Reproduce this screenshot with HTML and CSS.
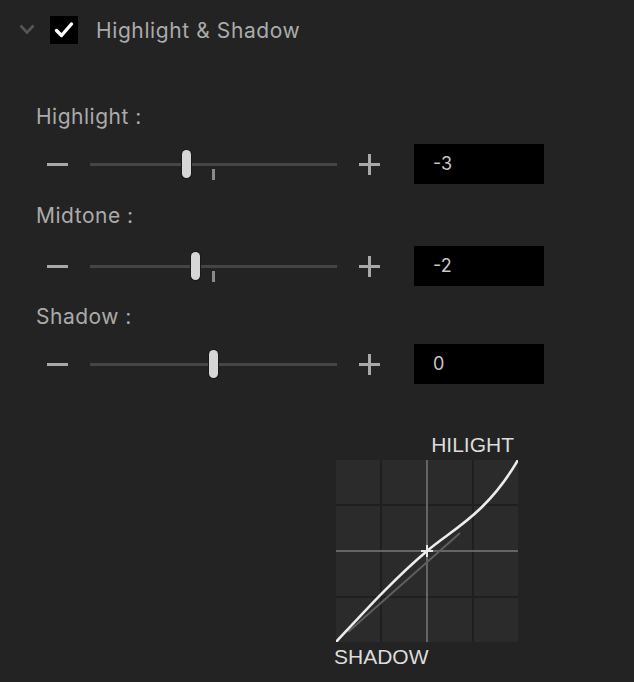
FILE: index.html
```html
<!DOCTYPE html>
<html>
<head>
<meta charset="utf-8">
<link rel="stylesheet" href="styles.css">
</head>
<body>
<div class="panel">
  <div class="header">
    <svg class="chevron" width="16" height="11" viewBox="0 0 16 11"><path d="M1.5 1.5 L8 8.5 L14.5 1.5" fill="none" stroke="#565656" stroke-width="2.6"/></svg>
    <div class="checkbox">
      <svg width="28" height="28" viewBox="0 0 28 28"><path d="M6.5 14.5 L11.5 19.5 L21.5 8" fill="none" stroke="#ffffff" stroke-width="3.4" stroke-linecap="round" stroke-linejoin="round"/></svg>
    </div>
    <div class="title">Highlight &amp; Shadow</div>
  </div>

  <div class="group g1">
    <div class="label">Highlight :</div>
    <div class="row">
      <div class="minus"></div>
      <div class="slider">
        <div class="track"></div>
        <div class="tick"></div>
        <div class="thumb" style="left:92px"></div>
      </div>
      <div class="plus"></div>
      <div class="valuebox">-3</div>
    </div>
  </div>

  <div class="group g2">
    <div class="label">Midtone :</div>
    <div class="row">
      <div class="minus"></div>
      <div class="slider">
        <div class="track"></div>
        <div class="tick"></div>
        <div class="thumb" style="left:101px"></div>
      </div>
      <div class="plus"></div>
      <div class="valuebox">-2</div>
    </div>
  </div>

  <div class="group g3">
    <div class="label">Shadow :</div>
    <div class="row">
      <div class="minus"></div>
      <div class="slider">
        <div class="track"></div>
        <div class="thumb" style="left:119px"></div>
      </div>
      <div class="plus"></div>
      <div class="valuebox">0</div>
    </div>
  </div>

  <div class="graphwrap">
    <div class="hilight">HILIGHT</div>
    <svg class="graph" width="182" height="182" viewBox="0 0 182 182">
      <rect x="0" y="0" width="182" height="182" fill="#2b2b2b"/>
      <g stroke="#1f1f1f" stroke-width="2">
        <line x1="45" y1="0" x2="45" y2="182"/>
        <line x1="137" y1="0" x2="137" y2="182"/>
        <line x1="0" y1="45" x2="182" y2="45"/>
        <line x1="0" y1="137" x2="182" y2="137"/>
      </g>
      <g stroke="#7a7a7a" stroke-width="1.5">
        <line x1="91" y1="0" x2="91" y2="182"/>
        <line x1="0" y1="91" x2="182" y2="91"/>
      </g>
      <path d="M12 172 L124 73" stroke="#5e5e5e" stroke-width="2" fill="none"/>
      <path d="M0 182 C28 152 58 119 91 91 C115 70 150 55 182 0" stroke="#ececec" stroke-width="2.6" fill="none"/>
      <g stroke="#e6e6e6" stroke-width="2">
        <line x1="85" y1="91" x2="97" y2="91"/>
        <line x1="91" y1="85" x2="91" y2="97"/>
      </g>
    </svg>
    <div class="shadowlbl">SHADOW</div>
  </div>
</div>
</body>
</html>
```

FILE: styles.css
```css
html, body {
  margin: 0;
  padding: 0;
  background: #232323;
}
.panel {
  width: 634px;
  height: 682px;
  background: #232323;
  font-family: Inter, "Noto Sans", sans-serif;
  overflow: hidden;
}
.header {
  height: 60px;
  display: flex;
  align-items: center;
  padding-left: 19px;
}
.chevron {
  display: block;
  margin-right: 15px;
  margin-top: -1px;
}
.checkbox {
  width: 28px;
  height: 28px;
  background: #000;
  margin-right: 18px;
}
.checkbox svg {
  display: block;
}
.title {
  color: #ababab;
  font-size: 21px;
  line-height: 24px;
  letter-spacing: 0.6px;
  margin-top: 1px;
}
.group .label {
  color: #ababab;
  font-size: 21px;
  line-height: 24px;
  letter-spacing: 0.5px;
  padding-left: 36px;
  height: 24px;
}
.g1 { margin-top: 45px; }
.g2 { margin-top: 20px; }
.g3 { margin-top: 19px; }
.g1 .row { margin-top: 15px; }
.g2 .row { margin-top: 18px; }
.g3 .row { margin-top: 15px; }
.row {
  display: flex;
  align-items: center;
  height: 40px;
  padding-left: 47px;
}
.minus {
  width: 21px;
  height: 3px;
  background: #a9a9a9;
}
.slider {
  position: relative;
  width: 247px;
  height: 40px;
  margin-left: 22px;
}
.track {
  position: absolute;
  left: 0;
  right: 0;
  top: 19px;
  height: 3px;
  background: #454545;
}
.tick {
  position: absolute;
  left: 122px;
  top: 25px;
  width: 3px;
  height: 11px;
  background: #8a8a8a;
}
.thumb {
  position: absolute;
  top: 6px;
  width: 9px;
  height: 28px;
  border-radius: 4.5px;
  background: #d6d6d6;
  box-shadow: 0 0 0 1px #1a1a1a;
}
.plus {
  position: relative;
  width: 21px;
  height: 21px;
  margin-left: 22px;
}
.plus::before {
  content: "";
  position: absolute;
  left: 0;
  top: 9px;
  width: 21px;
  height: 3px;
  background: #a9a9a9;
}
.plus::after {
  content: "";
  position: absolute;
  left: 9px;
  top: 0;
  width: 3px;
  height: 21px;
  background: #a9a9a9;
}
.valuebox {
  width: 111px;
  height: 40px;
  margin-left: 34px;
  background: #000;
  color: #c8c8c8;
  font-size: 18px;
  line-height: 40px;
  padding-left: 19px;
}
.graphwrap {
  margin-top: 49px;
  margin-left: 334px;
  width: 190px;
}
.hilight, .shadowlbl {
  font-family: "Liberation Sans", Arial, sans-serif;
  font-size: 21px;
  line-height: 24px;
  color: #dcdcdc;
  height: 24px;
}
.hilight {
  text-align: right;
  padding-right: 10px;
  margin-bottom: 3px;
}
.graph {
  display: block;
  margin-left: 2px;
}
.shadowlbl {
  margin-top: 3px;
}
```
